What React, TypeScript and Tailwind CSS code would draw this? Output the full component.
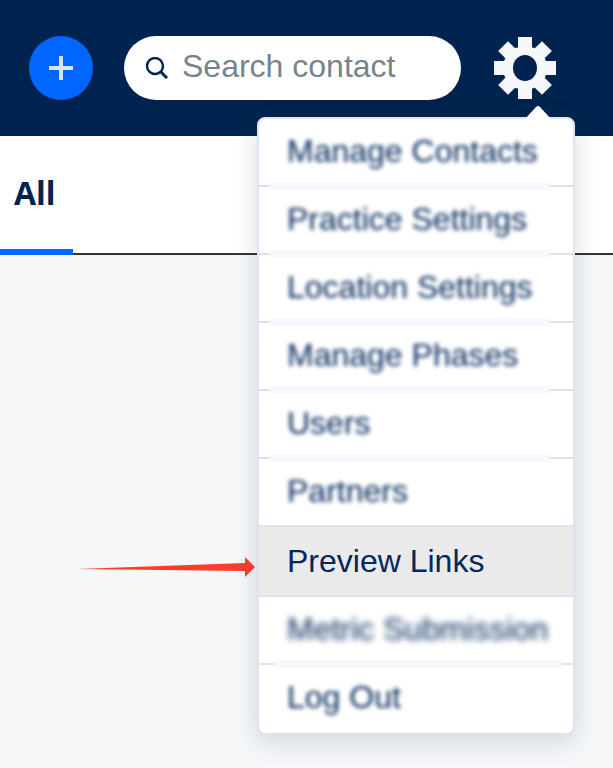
import { useState } from 'react'

type MenuItem = {
  label: string
  blur: string
  patch: string
}

const shortPatch = 'left-[11px] right-[23px]'
const longPatch = 'left-[15px] right-[11px]'

const menuItems: MenuItem[] = [
  { label: 'Manage Contacts', blur: 'blur-[2px]', patch: shortPatch },
  { label: 'Practice Settings', blur: 'blur-[2px]', patch: shortPatch },
  { label: 'Location Settings', blur: 'blur-[2px]', patch: shortPatch },
  { label: 'Manage Phases', blur: 'blur-[2px]', patch: shortPatch },
  { label: 'Users', blur: 'blur-[2px]', patch: shortPatch },
  { label: 'Partners', blur: 'blur-[2px]', patch: '' },
  { label: 'Preview Links', blur: '', patch: '' },
  { label: 'Metric Submission', blur: 'blur-[3px]', patch: longPatch },
  { label: 'Log Out', blur: 'blur-[2px]', patch: '' },
]

function GearIcon() {
  return (
    <svg viewBox="-31 -31 62 62" className="size-[62px]" aria-hidden="true">
      <g fill="#f5f7f9">
        <path
          fillRule="evenodd"
          d="M-22 0a22 22 0 1 0 44 0a22 22 0 1 0 -44 0zM-12 0a12 13 0 1 1 24 0a12 13 0 1 1 -24 0z"
        />
        {[0, 45, 90, 135, 180, 225, 270, 315].map((angle) => (
          <rect key={angle} x="-7" y="-31" width="14" height="13" transform={`rotate(${angle})`} />
        ))}
      </g>
    </svg>
  )
}

function SettingsMenu() {
  return (
    <div className="absolute top-20 -right-[19px] z-10 w-[318px] rounded-lg border-2 border-[#dfe3ee] bg-white shadow-[0_6px_24px_rgba(40,60,80,0.18)]">
      {/* Pointer */}
      <svg viewBox="0 0 26 14" className="absolute -top-[14px] right-[22px] h-[14px] w-[26px]" aria-hidden="true">
        <path d="M0 14L11 2Q13 0 15 2L26 14z" fill="#fff" />
      </svg>

      <ul>
        {menuItems.map((item) => {
          const active = item.label === 'Preview Links'
          return (
            <li
              key={item.label}
              className={
                active
                  ? 'relative border-b-2 border-[#dfe3ee] bg-[#eaeaea]'
                  : 'relative border-b-2 border-[#dfe3ee] last:border-transparent'
              }
            >
              <a
                href="#"
                className={`block px-7 text-[32px] leading-9 whitespace-nowrap text-[#02285a] ${active ? 'py-4' : 'pt-[14px] pb-4'}`}
              >
                <span className={`inline-block align-top ${item.blur}`}>{item.label}</span>
              </a>
              {item.patch && (
                <span className={`absolute -bottom-[5px] z-10 h-2 bg-[#f7f8fb] blur-[1px] ${item.patch}`} />
              )}
            </li>
          )
        })}
      </ul>
    </div>
  )
}

export default function App() {
  const [search, setSearch] = useState('')

  return (
    <div className="relative min-h-screen overflow-hidden bg-[#f5f7f9] font-['Liberation_Sans',Arial,sans-serif]">
      {/* Header */}
      <header className="flex h-[136px] items-center bg-[#00244f] pr-[57px] pl-[29px]">
        <button aria-label="Add" className="flex size-16 shrink-0 items-center justify-center rounded-full bg-[#0066ff]">
          <svg viewBox="0 0 26 26" className="size-[26px]" aria-hidden="true">
            <path d="M13 1v24M1 13h24" stroke="#d3e5ff" strokeWidth="4" />
          </svg>
        </button>

        <label className="ml-[31px] flex h-16 min-w-0 flex-1 items-center rounded-full bg-white pl-[22px]">
          <svg viewBox="0 0 22 22" className="size-[22px] shrink-0" fill="none" stroke="#00244f" aria-hidden="true">
            <circle cx="9" cy="9" r="8" strokeWidth="2.4" />
            <path d="M14.5 14.5l6.5 6.5" strokeWidth="3" />
          </svg>
          <input
            type="text"
            aria-label="Search contact"
            placeholder="Search contact"
            value={search}
            onChange={(e) => setSearch(e.target.value)}
            className="ml-[14px] min-w-0 flex-1 bg-transparent pb-1 text-[32px] leading-9 text-[#00244f] outline-none placeholder:text-[#78848d]"
          />
        </label>

        <div className="relative ml-[33px] shrink-0">
          <button aria-label="Settings" className="block">
            <GearIcon />
          </button>
          <SettingsMenu />
        </div>
      </header>

      {/* Tabs */}
      <nav className="flex h-[119px] border-b-2 border-[#333] bg-white">
        <a
          href="#"
          className="-mb-[2px] flex w-[73px] items-center border-b-[6px] border-[#0066ff] pl-[14px] font-['Open_Sans',sans-serif] text-[32px] leading-9 font-bold text-[#00244f]"
        >
          All
        </a>
      </nav>

      {/* Arrow pointing at the active item */}
      <svg
        viewBox="0 0 178 20"
        className="absolute top-[557px] right-[358px] h-5 w-[178px]"
        fill="#ff3b2b"
        aria-hidden="true"
      >
        <path d="M0 12L168 6V0L178 10L168 20V14z" />
      </svg>
    </div>
  )
}
